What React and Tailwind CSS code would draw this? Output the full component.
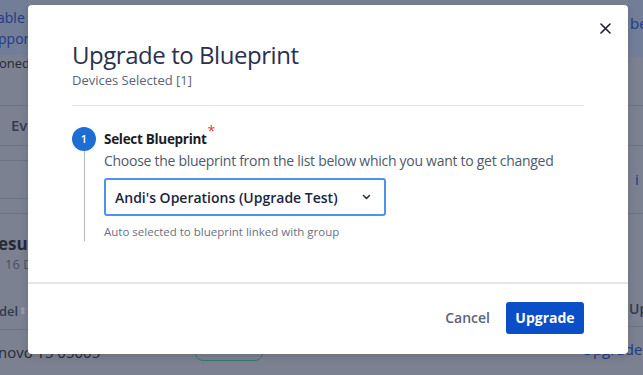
import React from "react";

const font = { fontFamily: '"Open Sans", "Noto Sans", sans-serif' };

function Background() {
  return (
    <div className="w-[643px] h-[375px] bg-[#7b8191] overflow-hidden flex text-[#2b3142]">
      {/* left strip */}
      <div className="w-[28px] shrink-0 flex flex-col">
        <div className="h-[55px] bg-[#727e98] flex flex-col justify-center text-[14px] leading-[21px] text-[#1f3a86] whitespace-nowrap">
          <span className="-ml-[3px]">able</span>
          <span className="-ml-[2px]">pport</span>
        </div>
        <div className="-ml-[1px] text-[13px] leading-[16px] whitespace-nowrap text-[#262b36]">oned</div>
        <div className="h-[34px]" />
        <div className="border-t border-[#6d7383] h-[40px] flex items-center pl-[11px] text-[15px] font-semibold text-[#333a55] whitespace-nowrap">Eve</div>
        <div className="border-t border-[#6d7383] h-[15px]" />
        <div className="border-t border-[#6d7383] h-[38px]" />
        <div className="border-t border-[#6d7383] h-[15px]" />
        <div className="border-t border-[#6d7383] h-[20px]" />
        <div className="-ml-[2px] text-[17px] font-bold leading-[22px] whitespace-nowrap text-[#262b36]">esul</div>
        <div className="pl-[5px] text-[13px] leading-[18px] whitespace-nowrap text-[#4a5062]">16 D</div>
        <div className="h-[30px]" />
        <div className="-ml-[1px] flex items-center text-[13px] font-semibold leading-[16px] whitespace-nowrap text-[#333a4c]">del<span className="text-[#9aa0ad] text-[9px] ml-[1px]">⇕</span></div>
        <div className="h-[10px]" />
        <div className="border-t border-[#6d7383] h-[14px]" />
        <div className="-ml-[2px] text-[15px] leading-[18px] whitespace-nowrap text-[#262b36]">novo T5 05005</div>
      </div>
      <div className="w-[600px] shrink-0 flex flex-col justify-end">
        <div className="h-[37px] flex items-start pl-[167px]">
          <div className="w-[68px] h-[23px] rounded-[8px] border border-[#2f7a6d]" />
        </div>
      </div>
      <div className="flex-1 flex flex-col">
        <div className="h-[57px] bg-[#727e98] flex items-start pt-[12px] pl-[2px] text-[15px] text-[#1f3a86] whitespace-nowrap">be</div>
        <div className="h-[48px]" />
        <div className="border-t border-[#6d7383] h-[40px]" />
        <div className="border-t border-[#6d7383] h-[68px] flex items-center pl-[7px] text-[15px] text-[#1f3a86]">i</div>
        <div className="border-t border-[#6d7383] h-[85px]" />
        <div className="h-[28px] flex items-start pl-[1px] text-[14px] font-semibold text-[#333a4c] whitespace-nowrap">Up</div>
        <div className="border-t border-[#6d7383] h-[40px] pt-[13px] -ml-[46px] text-[15px] text-[#1f3a86] whitespace-nowrap leading-[18px]">Upgrade N</div>
      </div>
    </div>
  );
}

export default function App() {
  return (
    <div className="relative w-[643px] h-[375px] overflow-hidden" style={font}>
      <Background />
      <div className="absolute inset-0 pl-[28px] pt-[5px]">
        <div className="relative w-[600px] h-[349px] bg-white rounded-[4px] shadow-[0_2px_8px_rgba(0,0,0,0.15)] flex flex-col">
          <button className="absolute right-[17px] top-[17px] w-[12px] h-[12px] flex items-center justify-center text-[#1b1f2a]">
            <svg width="11" height="11" viewBox="0 0 11 11" fill="none" stroke="currentColor" strokeWidth="1.6" strokeLinecap="round">
              <path d="M1 1L10 10M10 1L1 10" />
            </svg>
          </button>
          <div className="px-[44px] pt-[34px]">
            <h2 className="text-[24px] leading-[32px] text-[#2b3050] tracking-[-0.45px]">Upgrade to Blueprint</h2>
            <p className="text-[13px] leading-[18px] text-[#5b6479]">Devices Selected [1]</p>
            <div className="border-t border-[#e3e6eb] mt-[16px]" />
            <div className="flex gap-[8px] mt-[21px]">
              <div className="flex flex-col items-center w-[24px] shrink-0">
                <div className="w-[24px] h-[24px] rounded-full bg-[#1c6dd4] text-white text-[11px] font-semibold flex items-center justify-center">1</div>
                <div className="w-px h-[90px] bg-[#b4b7bd]" />
              </div>
              <div className="flex flex-col">
                <div className="flex items-start h-[24px] pt-[3px]">
                  <span className="text-[13.5px] leading-[18px] font-bold tracking-[-0.3px] text-[#1b1d24]">Select Blueprint</span>
                  <span className="text-[14px] leading-[10px] text-[#e8401c] -mt-[4px] ml-[1px]">*</span>
                </div>
                <p className="text-[14px] leading-[20px] tracking-[-0.28px] text-[#4f596d]">Choose the blueprint from the list below which you want to get changed</p>
                <div className="mt-[7px] w-[282px] h-[38px] border-2 border-[#4d93ee] rounded-[3px] flex items-center justify-between pl-[9px] pr-[13px]">
                  <span className="text-[14px] font-semibold text-[#1c2440]">Andi's Operations (Upgrade Test)</span>
                  <svg width="9" height="6" viewBox="0 0 9 6" fill="none" stroke="#2b3142" strokeWidth="1.6" strokeLinecap="round" strokeLinejoin="round">
                    <path d="M1.5 1.5L4.5 4.5L7.5 1.5" />
                  </svg>
                </div>
                <p className="text-[11.5px] leading-[16px] text-[#687185] mt-[8px]">Auto selected to blueprint linked with group</p>
              </div>
            </div>
          </div>
          <div className="mt-auto border-t-2 border-[#e3e6eb] h-[72px] pb-[3px] flex items-center justify-end gap-[16px] px-[44px]">
            <button className="text-[14px] font-semibold text-[#5b6479]">Cancel</button>
            <button className="w-[78px] h-[32px] rounded-[3px] bg-[#0a4fc8] text-white text-[14px] font-bold">Upgrade</button>
          </div>
        </div>
      </div>
    </div>
  );
}
